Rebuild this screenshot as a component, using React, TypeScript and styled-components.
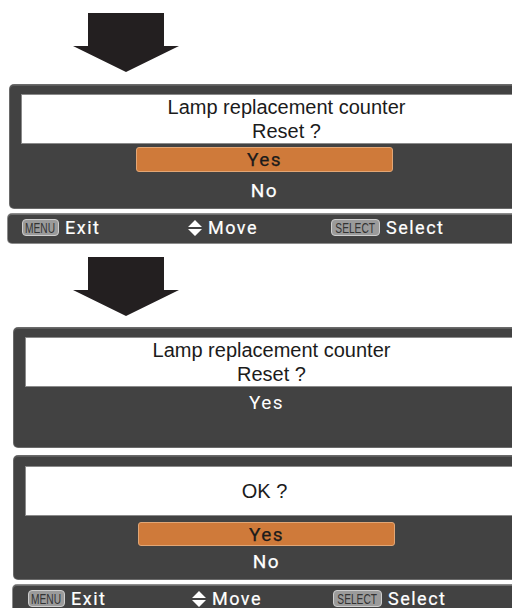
import React from "react";
import styled, { createGlobalStyle } from "styled-components";

const GlobalStyle = createGlobalStyle`
  html, body {
    margin: 0;
    padding: 0;
    background: #ffffff;
    overflow: hidden;
  }
  body {
    font-family: "Liberation Sans", Arial, sans-serif;
  }
`;

const Page = styled.div`
  width: 512px;
  height: 608px;
  overflow: hidden;
  display: flex;
  flex-direction: column;
`;

const ArrowWrap = styled.div<{ $top: number }>`
  margin: ${(p) => p.$top}px 0 0 73px;
  width: 106px;
  height: 59px;
  flex: none;
  svg {
    display: block;
  }
`;

const Panel = styled.div<{
  $top: number;
  $left: number;
  $width: number;
  $padTop: number;
  $padBottom: number;
}>`
  flex: none;
  box-sizing: border-box;
  margin: ${(p) => p.$top}px 0 0 ${(p) => p.$left}px;
  width: ${(p) => p.$width}px;
  padding: ${(p) => p.$padTop}px 13px ${(p) => p.$padBottom}px 12px;
  background: #424242;
  border-radius: 4px;
  box-shadow: inset 0 1px 0 #5c5c5c, 0 0 0 1px #6a6a6a;
`;

const Message = styled.div<{ $shift?: number }>`
  background: #ffffff;
  height: 48px;
  display: flex;
  flex-direction: column;
  justify-content: center;
  align-items: center;
  padding-right: ${(p) => p.$shift ?? 0}px;
  box-shadow: 0 0 0 1px #8a8a8a;
  color: #1b1b1b;
  font-family: "Liberation Sans", Arial, sans-serif;
  font-size: 20px;
  line-height: 24px;
`;

const Options = styled.div<{ $offset: number }>`
  width: 257px;
  margin-left: ${(p) => p.$offset}px;
  display: flex;
  flex-direction: column;
`;

const Option = styled.div<{ $selected?: boolean; $gap: number; $h: number; $light?: boolean }>`
  box-sizing: border-box;
  margin-top: ${(p) => p.$gap}px;
  height: ${(p) => p.$h}px;
  display: flex;
  align-items: center;
  justify-content: center;
  font-family: Roboto, "DejaVu Sans", sans-serif;
  font-weight: 400;
  font-size: 19px;
  letter-spacing: 1.5px;
  -webkit-text-stroke: ${(p) => (p.$light ? "0" : "0.25px")} currentColor;
  color: ${(p) => (p.$selected ? "#1b1b1b" : "#ffffff")};
  background: ${(p) => (p.$selected ? "#cf7a3a" : "transparent")};
  border: 1px solid ${(p) => (p.$selected ? "#e2a675" : "transparent")};
  border-radius: 3px;
`;

const Footer = styled.div<{ $left: number; $pad: number; $cols: string }>`
  flex: none;
  box-sizing: border-box;
  margin: 6px 0 0 ${(p) => p.$left}px;
  width: 560px;
  height: 29px;
  padding: 0 0 2px ${(p) => p.$pad}px;
  background: #424242;
  border-radius: 4px;
  box-shadow: inset 0 1px 0 #6e6e6e, 0 0 0 1px #8c8c8c;
  display: grid;
  grid-template-columns: ${(p) => p.$cols};
  align-items: center;
`;

const Hint = styled.div`
  display: flex;
  align-items: center;
  gap: 6px;
  color: #ffffff;
  font-family: Roboto, "DejaVu Sans", sans-serif;
  font-weight: 400;
  font-size: 18px;
  letter-spacing: 1.5px;
  -webkit-text-stroke: 0.2px #ffffff;
  svg {
    display: block;
  }
`;

const Badge = styled.span<{ $w: number }>`
  box-sizing: border-box;
  width: ${(p) => p.$w}px;
  height: 17px;
  display: inline-flex;
  align-items: center;
  justify-content: center;
  overflow: hidden;
  background: #9b9b9b;
  border: 1px solid #cdcdcd;
  border-radius: 4px;
  color: #333333;
  font-family: "Liberation Sans", Arial, sans-serif;
  font-weight: 400;
  font-size: 15px;
  letter-spacing: 0;
  -webkit-text-stroke: 0;
  span {
    display: inline-block;
    transform: scaleX(0.68);
    transform-origin: center;
    white-space: nowrap;
  }
`;

const Arrow = ({ top }: { top: number }) => (
  <ArrowWrap $top={top}>
    <svg width="106" height="59" viewBox="0 0 106 59">
      <path d="M15 0H91V33H106L53 59L0 33H15Z" fill="#231f20" />
    </svg>
  </ArrowWrap>
);

const UpDown = () => (
  <svg width="14" height="16" viewBox="0 0 14 16">
    <path d="M7 0L14 7H0Z M0 9H14L7 16Z" fill="#ffffff" />
  </svg>
);

const HelpBar = ({ left, pad, cols }: { left: number; pad: number; cols: string }) => (
  <Footer $left={left} $pad={pad} $cols={cols}>
    <Hint>
      <Badge $w={37}>
        <span>MENU</span>
      </Badge>
      Exit
    </Hint>
    <Hint>
      <UpDown />
      Move
    </Hint>
    <Hint>
      <Badge $w={49}>
        <span>SELECT</span>
      </Badge>
      Select
    </Hint>
  </Footer>
);

export default function App() {
  return (
    <Page>
      <GlobalStyle />
      <Arrow top={13} />
      <Panel $top={13} $left={10} $width={554} $padTop={10} $padBottom={5}>
        <Message>
          <div>Lamp replacement counter</div>
          <div>Reset ?</div>
        </Message>
        <Options $offset={114}>
          <Option $selected $gap={4} $h={25}>
            Yes
          </Option>
          <Option $gap={6} $h={25}>
            No
          </Option>
        </Options>
      </Panel>
      <HelpBar left={8} pad={14} cols="166px 143px auto" />

      <Arrow top={14} />
      <Panel $top={12} $left={14} $width={516} $padTop={10} $padBottom={33}>
        <Message>
          <div>Lamp replacement counter</div>
          <div>Reset ?</div>
        </Message>
        <Options $offset={112}>
          <Option $gap={4} $h={24} $light>
            Yes
          </Option>
        </Options>
      </Panel>
      <Panel $top={9} $left={14} $width={516} $padTop={11} $padBottom={6}>
        <Message $shift={14}>
          <div>OK ?</div>
        </Message>
        <Options $offset={112}>
          <Option $selected $gap={7} $h={24}>
            Yes
          </Option>
          <Option $gap={3} $h={24}>
            No
          </Option>
        </Options>
      </Panel>
      <HelpBar left={13} pad={15} cols="164px 141px auto" />
    </Page>
  );
}
